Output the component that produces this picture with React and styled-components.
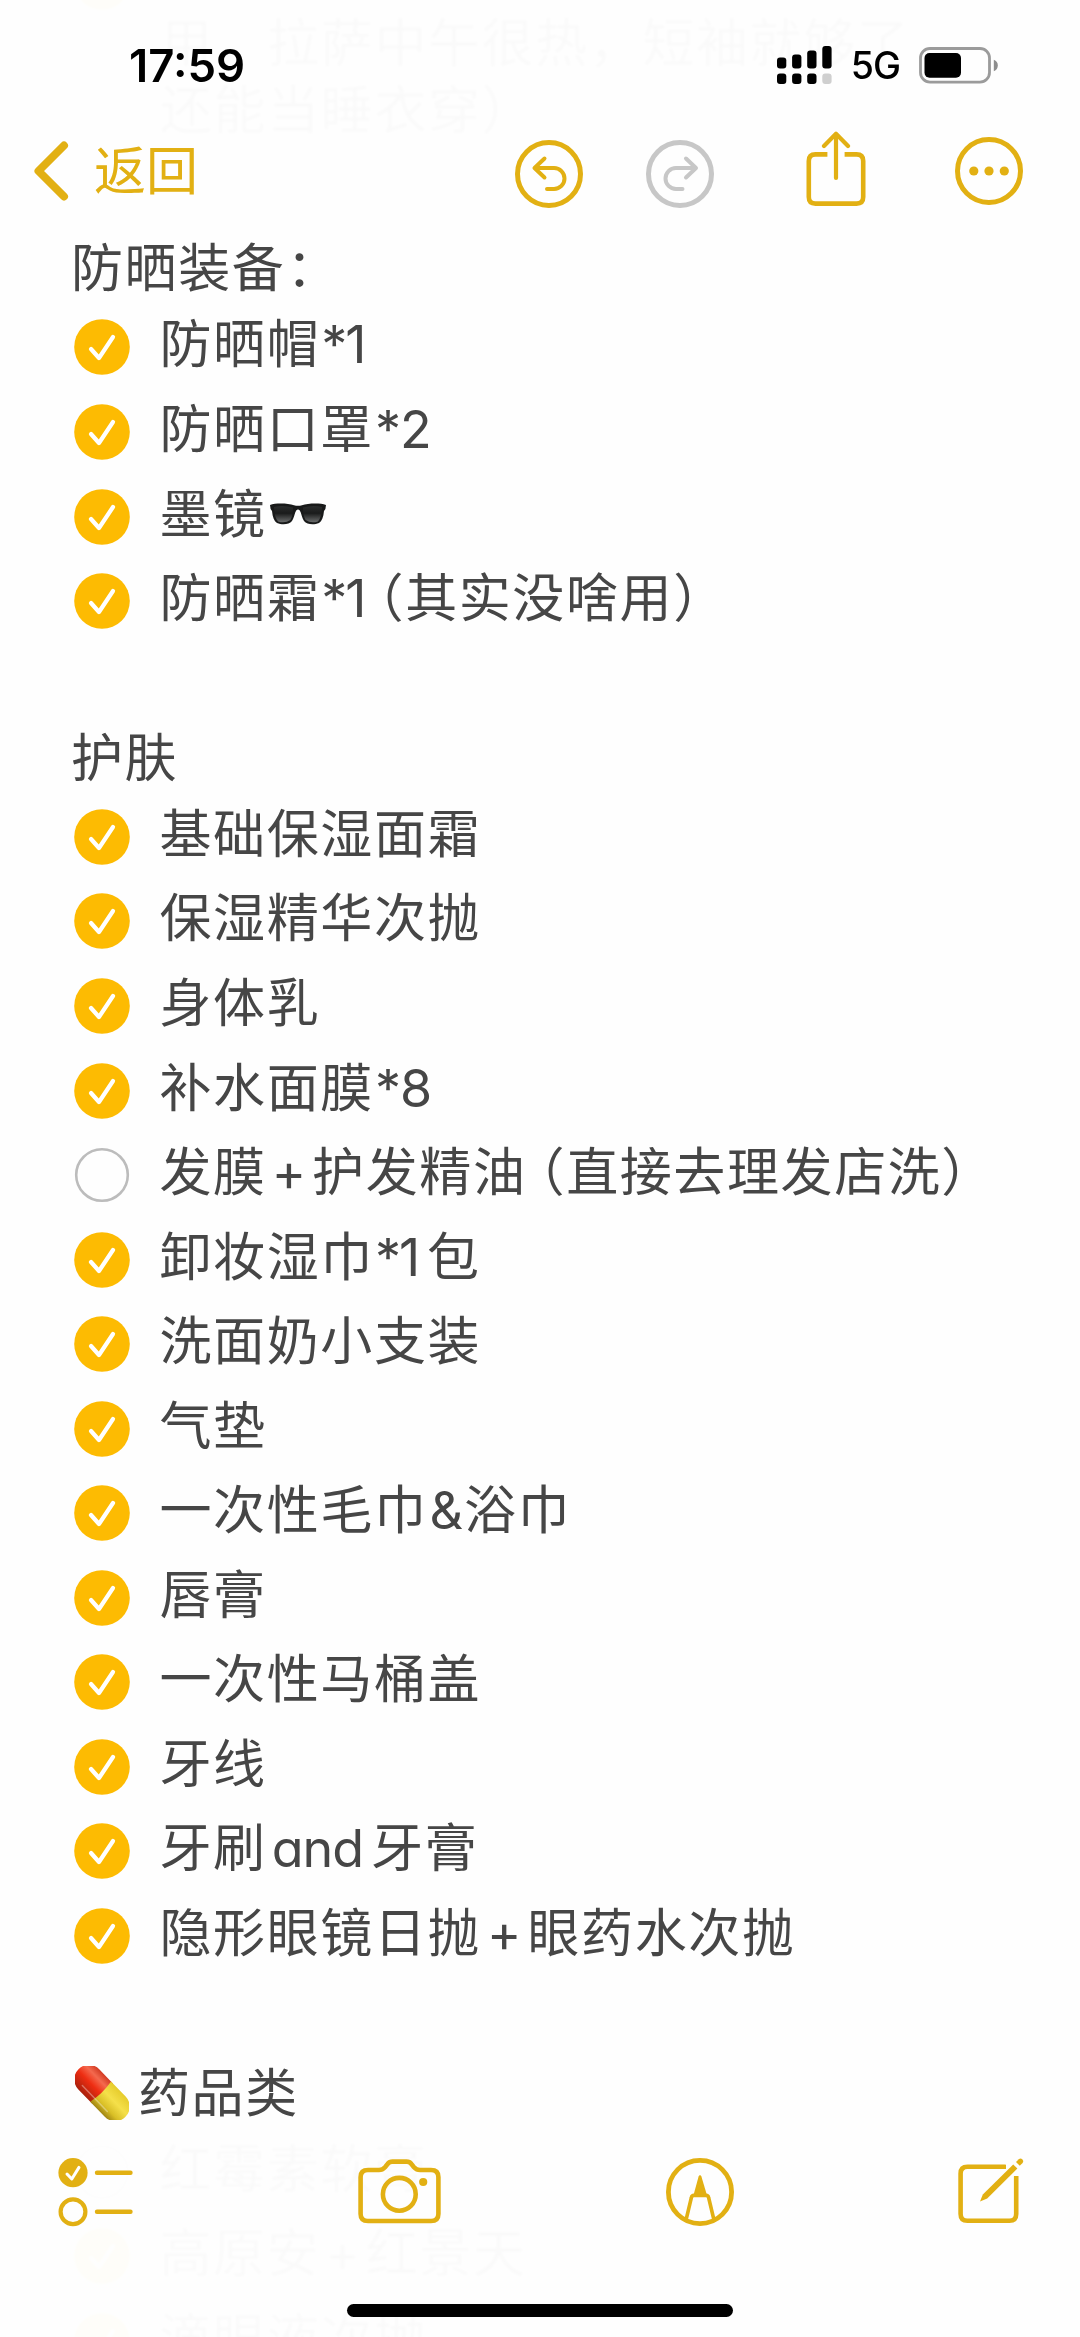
import styled, { createGlobalStyle, css } from "styled-components";

const GOLD = "#e2b013";

const sections = [
  {
    title: "防晒装备",
    colon: true,
    items: [
      { done: true, parts: ["防晒帽", { t: "*1", l: 1, s: -2 }] },
      { done: true, parts: ["防晒口罩", { t: "*2", l: 1, s: -1 }] },
      { done: true, parts: ["墨镜", { icon: "glasses" }] },
      { done: true, parts: ["防晒霜", { t: "*1", l: 1, s: -2, r: 1 }, { open: true }, "其实没啥用）"] },
    ],
  },
  {
    title: "护肤",
    items: [
      { done: true, parts: ["基础保湿面霜"] },
      { done: true, parts: ["保湿精华次抛"] },
      { done: true, parts: ["身体乳"] },
      { done: true, parts: ["补水面膜", { t: "*8", l: 1, s: -1 }] },
      {
        done: false,
        parts: ["发膜", { t: "+", l: 5, r: 6 }, "护发精油", { open: true }, "直接去理发店洗）"],
      },
      { done: true, parts: ["卸妆湿巾", { t: "*1", l: 1, s: -2, r: 9 }, "包"] },
      { done: true, parts: ["洗面奶小支装"] },
      { done: true, parts: ["气垫"] },
      { done: true, parts: ["一次性毛巾", { t: "&", l: 2, r: 1 }, "浴巾"] },
      { done: true, parts: ["唇膏"] },
      { done: true, parts: ["一次性马桶盖"] },
      { done: true, parts: ["牙线"] },
      { done: true, parts: ["牙刷", { t: "and", l: 5, s: -1, r: 8 }, "牙膏"] },
      { done: true, parts: ["隐形眼镜日抛", { t: "+", l: 6, r: 6 }, "眼药水次抛"] },
    ],
  },
  {
    title: "药品类",
    pill: true,
    items: [
      { done: false, parts: ["红霉素软膏"] },
      { done: true, parts: ["高原安", { t: "+", l: 5, r: 6 }, "红景天"] },
      { done: true, parts: ["滴眼液次抛"] },
    ],
  },
];

export default function App() {
  return (
    <Page>
      <GlobalStyle />
      <Note>
        <LongItem>
          <Check done />
          <LongText>
            <span>用，拉萨中午很热，短袖就够了</span>
            <span>还能当睡衣穿）</span>
          </LongText>
        </LongItem>
        {sections.map((section) => (
          <Section key={section.title}>
            <Heading>
              {section.pill && <Pill />}
              {section.title}
              {section.colon && <Colon>：</Colon>}
            </Heading>
            {section.items.map((item, i) => (
              <Item key={i}>
                <Check done={item.done} />
                <ItemText>
                  {item.parts.map((part, n) => (
                    <Part key={n} part={part} />
                  ))}
                </ItemText>
              </Item>
            ))}
          </Section>
        ))}
      </Note>
      <Header>
        <StatusBar>
          <Time>17:59</Time>
          <Status>
            <Signal />
            <Network>5G</Network>
            <Battery />
          </Status>
        </StatusBar>
        <NavBar>
          <Back>
            <svg width="40" height="64" viewBox="0 0 40 64">
              <path d="M32 6.5 L6.5 32 L32 57.5" {...line(8)} />
            </svg>
            返回
          </Back>
          <Actions>
            <History>
              <Undo />
              <Redo />
            </History>
            <Share />
            <More />
          </Actions>
        </NavBar>
      </Header>
      <Footer>
        <Toolbar>
          <Checklist />
          <Camera />
          <Marker />
          <Compose />
        </Toolbar>
        <HomeBar />
      </Footer>
    </Page>
  );
}

function Part({ part }) {
  if (typeof part === "string") return part;
  if (part.icon) return <Glasses />;
  if (part.open) return <OpenParen>（</OpenParen>;
  return (
    <Latin $l={part.l} $r={part.r} $s={part.s}>
      {part.t}
    </Latin>
  );
}

function Check({ done }) {
  return (
    <CheckIcon viewBox="0 0 56 56">
      {done ? (
        <>
          <circle cx="28" cy="28" r="27.8" fill="#fdbb02" />
          <path d="M17 30 L25 39 L39 18" {...line(4.2, "#fff")} />
        </>
      ) : (
        <circle cx="28" cy="28" r="25.8" fill="none" stroke="#bcbcbc" strokeWidth="2.6" />
      )}
    </CheckIcon>
  );
}

function line(width, color = GOLD) {
  return {
    fill: "none",
    stroke: color,
    strokeWidth: width,
    strokeLinecap: "round",
    strokeLinejoin: "round",
  };
}

function Glasses() {
  return (
    <GlassesIcon viewBox="0 0 56 22" role="img" aria-label="🕶️">
      <defs>
        <linearGradient id="lens" x1="0" y1="0" x2="0" y2="1">
          <stop offset="0" stopColor="#2b2d2d" />
          <stop offset="0.45" stopColor="#1a1b1b" />
          <stop offset="1" stopColor="#6a6c6c" />
        </linearGradient>
      </defs>
      <path
        d="M0 2 C6 -.4 18 .2 24 2.2 Q28 3.2 32 2.2 C38 .2 50 -.4 56 2 L55.4 6 L54 8 C53.4 14 52 18 49 20 C44 22 37 21.8 34 18 C32 15 31.4 10 29.8 7.4 Q28 5.4 26.2 7.4 C24.6 10 24 15 22 18 C19 21.8 12 22 7 20 C4 18 2.6 14 2 8 L.6 6 Z"
        fill="#181919"
      />
      <path d="M4 4 Q13 1.6 23 4.6 Q23 13 20.4 17 Q15 20.6 8 18.4 Q4.4 15 4 4 Z" fill="url(#lens)" />
      <path d="M52 4 Q43 1.6 33 4.6 Q33 13 35.6 17 Q41 20.6 48 18.4 Q51.6 15 52 4 Z" fill="url(#lens)" />
    </GlassesIcon>
  );
}

function Pill() {
  return (
    <PillIcon viewBox="0 0 54 54" role="img" aria-label="💊">
      <defs>
        <linearGradient id="pillRed" x1="0" y1="0" x2="0" y2="1">
          <stop offset="0" stopColor="#d23a22" />
          <stop offset="0.25" stopColor="#f4694e" />
          <stop offset="0.55" stopColor="#ee2d12" />
          <stop offset="1" stopColor="#a9200c" />
        </linearGradient>
        <linearGradient id="pillYellow" x1="0" y1="0" x2="0" y2="1">
          <stop offset="0" stopColor="#e6cc2c" />
          <stop offset="0.4" stopColor="#f5e04a" />
          <stop offset="0.75" stopColor="#d9bf26" />
          <stop offset="1" stopColor="#a08512" />
        </linearGradient>
      </defs>
      <g transform="rotate(46 27 27)">
        <path d="M28 12.5 H8 A14.5 14.5 0 0 0 8 41.5 H28 Z" fill="url(#pillRed)" />
        <path d="M25 12.5 H46 A14.5 14.5 0 0 1 46 41.5 H25 Q28 27 25 12.5 Z" fill="url(#pillYellow)" />
        <path d="M8 36 H44" stroke="#fff" strokeOpacity=".35" strokeWidth="1.5" strokeLinecap="round" />
      </g>
    </PillIcon>
  );
}

function Signal() {
  const tops = [11.5, 8.5, 4.5, 0];
  return (
    <svg width="55" height="38" viewBox="0 0 55 38">
      {tops.map((top, i) => (
        <g key={top}>
          <rect x={i * 15.1} y={top} width="9.3" height={22.5 - top} rx="3" />
          <rect x={i * 15.1} y="27.5" width="9.3" height="10.5" rx="3" fill={i === 3 ? "#cfcfcf" : "#000"} />
        </g>
      ))}
    </svg>
  );
}

function Battery() {
  return (
    <svg width="79" height="37" viewBox="0 0 79 37">
      <rect x="1.5" y="1.5" width="69" height="33.6" rx="9.5" fill="none" stroke="#9b9b9b" strokeWidth="2.8" />
      <rect x="5.5" y="6" width="36.5" height="24.8" rx="5" />
      <path d="M74.8 12.8 Q78.8 14.5 78.8 18.5 Q78.8 22.5 74.8 24.2 Z" fill="#8d8d8d" />
    </svg>
  );
}

function Undo() {
  return (
    <svg width="68" height="68" viewBox="0 0 68 68">
      <circle cx="34" cy="34" r="31.5" {...line(5)} />
      <path d="M29.5 18.5 L19.5 28 L29.5 37.5 M20 28 H39 A10.5 10.5 0 0 1 39 49 H32" {...line(4)} />
    </svg>
  );
}

function Redo() {
  return (
    <svg width="68" height="68" viewBox="0 0 68 68">
      <circle cx="34" cy="34" r="31.5" {...line(5, "#c7c7c7")} />
      <path d="M40 18.5 L50 28 L40 37.5 M49 28 H30 A10.5 10.5 0 0 0 30 49 H36.5" {...line(4, "#c7c7c7")} />
    </svg>
  );
}

function Share() {
  return (
    <ShareIcon viewBox="0 0 60 76">
      <path d="M21.4 23.4 H9.5 Q2.8 23.4 2.8 30 V66 Q2.8 72.6 9.5 72.6 H50.5 Q57.2 72.6 57.2 66 V30 Q57.2 23.4 50.5 23.4 H38.6" {...line(4.6)} strokeLinecap="butt" />
      <path d="M30 47 V3 M18 15 L30 2.8 L42 15" {...line(4.2)} />
    </ShareIcon>
  );
}

function More() {
  return (
    <MoreIcon viewBox="0 0 68 68">
      <circle cx="34" cy="34" r="31.5" {...line(5)} />
      <circle cx="18.8" cy="34" r="4.6" fill={GOLD} />
      <circle cx="34" cy="34" r="4.6" fill={GOLD} />
      <circle cx="49.3" cy="34" r="4.6" fill={GOLD} />
    </MoreIcon>
  );
}

function Checklist() {
  return (
    <svg width="76" height="70" viewBox="0 0 76 70">
      <circle cx="15" cy="15.7" r="14.6" fill={GOLD} />
      <path d="M9 17 L13.8 22 L21 10.4" {...line(3, "#fff")} />
      <circle cx="15" cy="54.7" r="12.4" {...line(4.2)} />
      <path d="M39 15.7 H72.5 M39 54.7 H72.5" {...line(4.4)} />
    </svg>
  );
}

function Camera() {
  return (
    <svg width="83" height="70" viewBox="0 0 83 70">
      <path d="M10 13 H21 Q24.5 13 27 10.2 L29.6 7 Q31.4 4.6 34.5 4.6 H48.5 Q51.6 4.6 53.4 7 L56 10.2 Q58.5 13 62 13 H73 Q80.4 13 80.4 20 V57 Q80.4 64 73 64 H10 Q2.6 64 2.6 57 V20 Q2.6 13 10 13 Z" {...line(4.6)} />
      <circle cx="41.3" cy="37.3" r="16.4" {...line(4.6)} />
      <circle cx="65.2" cy="25" r="4.1" fill={GOLD} />
    </svg>
  );
}

function Marker() {
  return (
    <svg width="68" height="70" viewBox="0 0 68 70">
      <circle cx="34" cy="35" r="31.6" {...line(4.8)} />
      <path d="M20.5 61 L25.4 40.5 Q25.8 38.4 28 38.4 H40 Q42.2 38.4 42.6 40.5 L47.5 61" {...line(3.6)} />
      <path d="M27 40 L32.6 19.6 Q34 16.6 35.4 19.6 L41.5 40 Z" fill={GOLD} />
    </svg>
  );
}

function Compose() {
  return (
    <svg width="67" height="70" viewBox="0 0 67 70">
      <path d="M48 9.8 H9.4 Q2.6 9.8 2.6 16.6 V57 Q2.6 63.8 9.4 63.8 H51.4 Q58.2 63.8 58.2 57 V19" {...line(4.6)} strokeLinecap="butt" />
      <path d="M47.5 7 L53 3 L62 12 L54 21 Z" fill="#fefefe" />
      <path d="M55.2 7.4 L59.4 11.6 L29.2 41.4 L22 44.6 L24.8 37.4 Z" fill={GOLD} />
      <path d="M58 5 L60.8 2.2 Q62.6 .8 64.4 2.4 Q66 4.2 64.6 6 L61.8 8.8 Z" fill={GOLD} />
    </svg>
  );
}

const GlobalStyle = createGlobalStyle`
  body {
    margin: 0;
    background: #fefefe;
  }
`;

const Page = styled.div`
  position: relative;
  width: 1080px;
  height: 2337px;
  overflow: hidden;
  background: #fefefe;
  color: #464646;
  font-family: Inter, "Noto Sans CJK SC", sans-serif;
  font-size: 52px;
  line-height: 67px;
`;

const Note = styled.main`
  display: flow-root;
  padding-left: 74px;
`;

const LongItem = styled.div`
  display: flex;
  align-items: flex-start;
  gap: 30px;
  height: 199.9px;
  margin-top: -46px;
`;

const bodyText = css`
  white-space: nowrap;
  letter-spacing: 1.6px;
`;

const LongText = styled.div`
  ${bodyText}
  display: flex;
  flex-direction: column;
  padding-top: 56px;
`;

const Section = styled.section`
  padding-top: 81.4px;
`;

const Heading = styled.div`
  ${bodyText}
  display: flex;
  align-items: center;
  height: 67px;
  margin-left: -3px;
  margin-bottom: 2.9px;
`;

const Colon = styled.span`
  margin-left: 1px;
`;

const Item = styled.div`
  display: flex;
  align-items: center;
  gap: 29.5px;
  height: 84.55px;
`;

const ItemText = styled.div`
  ${bodyText}
  height: 67px;
  padding-bottom: 5px;
`;

const Latin = styled.span`
  margin-left: ${({ $l = 0 }) => $l}px;
  margin-right: ${({ $r = 0 }) => $r}px;
  letter-spacing: ${({ $s = 0 }) => $s}px;
  font-feature-settings: "cv11";
`;

const OpenParen = styled.span`
  margin-left: -14px;
`;

const CheckIcon = styled.svg`
  flex: none;
  width: 56px;
  height: 56px;
`;

const GlassesIcon = styled.svg`
  width: 56px;
  height: 22px;
  margin-left: 3px;
  vertical-align: 8px;
`;

const PillIcon = styled.svg`
  width: 54px;
  height: 54px;
  margin: 0 9px 0 4px;
`;

const Header = styled.header`
  position: absolute;
  top: 0;
  left: 0;
  right: 0;
  height: 225px;
  background: rgba(254, 254, 254, 0.98);
  backdrop-filter: blur(1px);
`;

const StatusBar = styled.div`
  display: flex;
  align-items: center;
  justify-content: space-between;
  height: 130px;
  padding: 0 82px 0 129px;
  box-sizing: border-box;
  color: #000;
`;

const Time = styled.span`
  font-size: 45.5px;
  font-weight: 600;
`;

const Status = styled.div`
  display: flex;
  align-items: center;
  gap: 19px;
`;

const Network = styled.span`
  font-size: 37.5px;
  font-weight: 500;
  letter-spacing: -1px;
`;

const NavBar = styled.nav`
  display: flex;
  align-items: flex-start;
  justify-content: space-between;
  padding: 0 57px 0 32px;
`;

const Back = styled.div`
  display: flex;
  align-items: center;
  gap: 22px;
  height: 82px;
  color: ${GOLD};
`;

const Actions = styled.div`
  display: flex;
  align-items: flex-start;
`;

const History = styled.div`
  display: flex;
  gap: 62.6px;
  padding-top: 10px;
`;

const ShareIcon = styled.svg`
  width: 60px;
  height: 76px;
  margin: 1px 89px 0 92px;
`;

const MoreIcon = styled.svg`
  width: 68px;
  height: 68px;
  margin-top: 7px;
`;

const Footer = styled.footer`
  position: absolute;
  left: 0;
  right: 0;
  bottom: 0;
  height: 200px;
  background: rgba(254, 254, 254, 0.98);
  backdrop-filter: blur(1px);
`;

const Toolbar = styled.div`
  display: flex;
  justify-content: space-between;
  padding: 20px 55px 0 58px;
`;

const HomeBar = styled.div`
  width: 386px;
  height: 13px;
  margin: 77px auto 0;
  border-radius: 7px;
  background: #000;
`;
